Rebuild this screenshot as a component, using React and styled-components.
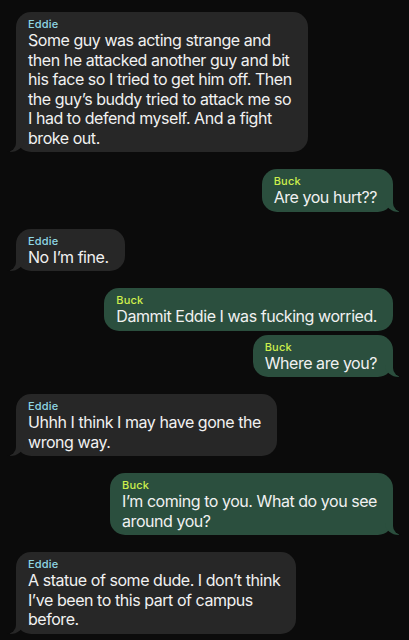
import styled, { createGlobalStyle } from "styled-components";

const PAGE = "#0b0b0b";

const GlobalStyle = createGlobalStyle`
  html, body {
    margin: 0;
    padding: 0;
    background: ${PAGE};
  }
  body {
    font-family: Inter, "Noto Sans", "Liberation Sans", sans-serif;
    -webkit-font-smoothing: antialiased;
  }
`;

const senders = {
  Eddie: { bubble: "#272727", name: "#8fd6e4", side: "left" },
  Buck: { bubble: "#2b4f3e", name: "#cdee4c", side: "right" },
};

const messages = [
  {
    from: "Eddie",
    text:
      "Some guy was acting strange and\nthen he attacked another guy and bit\nhis face so I tried to get him off. Then\nthe guy\u2019s buddy tried to attack me so\nI had to defend myself. And a fight\nbroke out.",
  },
  { from: "Buck", text: "Are you hurt??" },
  { from: "Eddie", text: "No I\u2019m fine." },
  { from: "Buck", text: "Dammit Eddie I was fucking worried." },
  { from: "Buck", text: "Where are you?" },
  { from: "Eddie", text: "Uhhh I think I may have gone the\nwrong way." },
  { from: "Buck", text: "I\u2019m coming to you. What do you see\naround you?" },
  {
    from: "Eddie",
    text: "A statue of some dude. I don\u2019t think\nI\u2019ve been to this part of campus\nbefore.",
  },
];

const Thread = styled.div`
  display: flex;
  flex-direction: column;
  padding: 12px 16px 0;
`;

const Row = styled.div`
  display: flex;
  justify-content: ${(p) => (p.$side === "right" ? "flex-end" : "flex-start")};
  margin-top: ${(p) => (p.$first ? "0" : p.$sameSender ? "4px" : "17px")};
`;

const Bubble = styled.div`
  position: relative;
  background: ${(p) => p.$color};
  border-radius: 15px;
  padding: 5px 16px 4px 12px;
  max-width: 300px;

  ${(p) =>
    p.$tail &&
    `
    &::before {
      content: "";
      position: absolute;
      bottom: 0;
      ${p.$side}: -6px;
      width: 14px;
      height: 16px;
      background: ${p.$color};
      ${p.$side === "left" ? "border-bottom-right-radius" : "border-bottom-left-radius"}: 14px 12px;
    }
    &::after {
      content: "";
      position: absolute;
      bottom: 0;
      ${p.$side}: -10px;
      width: 10px;
      height: 17px;
      background: ${PAGE};
      ${p.$side === "left" ? "border-bottom-right-radius" : "border-bottom-left-radius"}: 9px;
    }
  `}
`;

const Name = styled.div`
  position: relative;
  z-index: 1;
  color: ${(p) => p.$color};
  font-size: 11px;
  line-height: 14px;
  font-weight: 500;
  letter-spacing: 0.2px;
`;

const Body = styled.div`
  position: relative;
  z-index: 1;
  color: #f1f1f1;
  font-size: 16px;
  line-height: 19.5px;
  white-space: pre-line;
  letter-spacing: -0.45px;
`;

export default function App() {
  return (
    <>
      <GlobalStyle />
      <Thread>
        {messages.map((m, i) => {
          const s = senders[m.from];
          const prev = messages[i - 1];
          const next = messages[i + 1];
          return (
            <Row
              key={i}
              $side={s.side}
              $first={i === 0}
              $sameSender={prev && prev.from === m.from}
            >
              <Bubble
                $color={s.bubble}
                $side={s.side}
                $tail={!next || next.from !== m.from}
              >
                <Name $color={s.name}>{m.from}</Name>
                <Body>{m.text}</Body>
              </Bubble>
            </Row>
          );
        })}
      </Thread>
    </>
  );
}
